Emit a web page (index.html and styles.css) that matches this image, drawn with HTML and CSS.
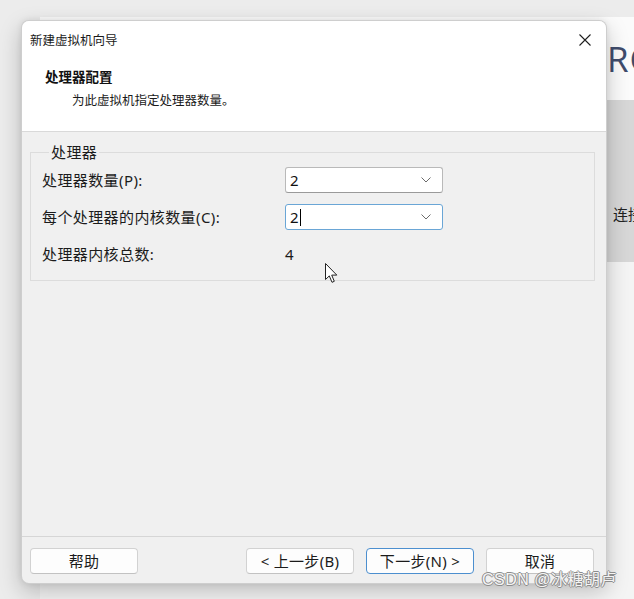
FILE: index.html
```html
<!DOCTYPE html>
<html lang="zh-CN">
<head>
<meta charset="utf-8">
<title>新建虚拟机向导</title>
<link rel="stylesheet" href="styles.css">
</head>
<body>
<div class="app">
  <div class="app-head"><span class="brand">RC</span></div>
  <div class="app-band"><span class="band-text">连接</span></div>
  <div class="app-rest"></div>
</div>

<div class="dialog">
  <div class="titlebar">
    <span class="title">新建虚拟机向导</span>
    <svg class="close" width="12" height="12" viewBox="0 0 12 12"><path d="M0.5 0.5 L11.5 11.5 M11.5 0.5 L0.5 11.5" stroke="#1f1f1f" stroke-width="1.1" fill="none"/></svg>
  </div>
  <div class="header">
    <div class="h-title">处理器配置</div>
    <div class="h-sub">为此虚拟机指定处理器数量。</div>
  </div>
  <div class="body">
    <fieldset class="group">
      <legend>处理器</legend>
      <div class="grid">
        <span class="label">处理器数量(P):</span>
        <div class="combo"><span class="val">2</span><svg class="chev" width="10" height="6" viewBox="0 0 10 6"><path d="M0.5 0.5 L5 5 L9.5 0.5" stroke="#6b6b6b" stroke-width="1" fill="none"/></svg></div>
        <span class="label">每个处理器的内核数量(C):</span>
        <div class="combo focus"><span class="val">2</span><span class="caret"></span><svg class="chev" width="10" height="6" viewBox="0 0 10 6"><path d="M0.5 0.5 L5 5 L9.5 0.5" stroke="#6b6b6b" stroke-width="1" fill="none"/></svg></div>
        <span class="label">处理器内核总数:</span>
        <span class="label total">4</span>
      </div>
    </fieldset>
  </div>
  <div class="footer">
    <button class="btn help">帮助</button>
    <div class="btn-group">
      <button class="btn">&lt; 上一步(B)</button>
      <button class="btn default">下一步(N) &gt;</button>
      <button class="btn">取消</button>
    </div>
  </div>
</div>

<svg class="cursor" width="13" height="21" viewBox="0 0 13 21"><path d="M0.5 0.5 L0.5 16.5 L4.3 12.9 L7 19.3 L9.3 18.3 L6.7 12.1 L11.8 12.1 Z" fill="#ffffff" stroke="#222" stroke-width="1" stroke-linejoin="round"/></svg>

<div class="watermark">CSDN @冰糖胡卢</div>
</body>
</html>
```
FILE: styles.css
```css
* { box-sizing: border-box; }
html, body { margin: 0; padding: 0; }
body {
  width: 634px;
  height: 599px;
  overflow: hidden;
  background: #ececec;
  font-family: "Noto Sans", "Noto Sans CJK SC", sans-serif;
  color: #1b1b1b;
  position: relative;
}

/* background application */
.app {
  margin-left: 40px;
  margin-top: 17px;
  height: 582px;
  display: flex;
  flex-direction: column;
  background: #fafafa;
}
.app-head {
  height: 83px;
  display: flex;
  align-items: center;
  padding-left: 567px;
  background: #fbfbfb;
}
.brand {
  font-family: "Open Sans", "Noto Sans", sans-serif;
  font-size: 35px;
  line-height: 40px;
  color: #3f4c6c;
  letter-spacing: 1px;
}
.app-band {
  height: 162px;
  background: #d7d7d7;
  padding-left: 573px;
  padding-top: 103px;
}
.band-text {
  font-family: "Noto Sans CJK SC", sans-serif;
  font-size: 15px;
  line-height: 20px;
  color: #222;
  white-space: nowrap;
}
.app-rest { flex: 1; background: #f4f4f4; }

/* dialog window */
.dialog {
  position: absolute;
  left: 21px;
  top: 20px;
  width: 586px;
  height: 564px;
  border: 1px solid rgba(0, 0, 0, 0.14);
  border-radius: 8px;
  overflow: hidden;
  background: #f0f0f0;
  box-shadow: 0 8px 22px rgba(0, 0, 0, 0.22), 0 0 6px rgba(0, 0, 0, 0.08);
  display: flex;
  flex-direction: column;
}
.titlebar {
  height: 37px;
  flex: none;
  background: #ffffff;
  display: flex;
  align-items: center;
  justify-content: space-between;
  padding: 0 15px 0 8px;
}
.title {
  font-family: "Noto Sans CJK SC", sans-serif;
  font-size: 12.5px;
  line-height: 18px;
  color: #1a1a1a;
}
.close { display: block; }

.header {
  height: 74px;
  flex: none;
  background: #ffffff;
  border-bottom: 1px solid #d9d9d9;
  padding-top: 8px;
}
.h-title {
  font-family: "Noto Sans CJK SC", sans-serif;
  font-weight: 700;
  font-size: 13.5px;
  line-height: 20px;
  padding-left: 23px;
  color: #111;
}
.h-sub {
  font-family: "Noto Sans CJK SC", sans-serif;
  font-size: 12.5px;
  line-height: 20px;
  margin-top: 4px;
  padding-left: 50px;
  color: #1a1a1a;
}

.body {
  flex: 1;
  padding: 10px 11px 0 8px;
  border-bottom: 1px solid #d6d6d6;
}
.group {
  margin: 0;
  border: 1px solid #dcdcdc;
  padding: 5px 0 13px 11px;
  min-width: 0;
}
.group legend {
  margin-left: 7px;
  padding: 0 2px;
  font-size: 15px;
  line-height: 20px;
  letter-spacing: 0.4px;
  color: #1b1b1b;
}
.grid {
  display: grid;
  grid-template-columns: 243px 158px;
  grid-auto-rows: 26px;
  row-gap: 11px;
  align-items: center;
}
.label {
  font-size: 15px;
  line-height: 20px;
  letter-spacing: 0.4px;
  color: #1b1b1b;
  white-space: nowrap;
}
.combo {
  height: 26px;
  background: #ffffff;
  border: 1px solid #b9b9b9;
  border-bottom-color: #9a9a9a;
  border-radius: 3px;
  display: flex;
  align-items: center;
  padding: 0 11px 0 4px;
}
.combo.focus {
  border-color: #6aa6d6;
}
.val {
  font-size: 15px;
  line-height: 20px;
  color: #111;
}
.caret {
  width: 1px;
  height: 17px;
  background: #000;
  margin-left: 1px;
}
.chev { margin-left: auto; display: block; }

.footer {
  height: 46px;
  flex: none;
  display: flex;
  align-items: flex-start;
  padding: 11px 12px 0 8px;
}
.btn-group {
  margin-left: auto;
  display: flex;
  gap: 12px;
}
.btn {
  width: 108px;
  height: 26px;
  margin: 0;
  padding: 0;
  background: #fdfdfd;
  border: 1px solid #d2d2d2;
  border-bottom-color: #c2c2c2;
  border-radius: 4px;
  font-family: "Noto Sans", "Noto Sans CJK SC", sans-serif;
  font-size: 15px;
  line-height: 20px;
  letter-spacing: 0.3px;
  color: #1b1b1b;
}
.btn.default {
  border-color: #4c8fcf;
}

.cursor {
  position: absolute;
  left: 325px;
  top: 263px;
}
.watermark {
  position: absolute;
  left: 482px;
  top: 569px;
  font-family: "Liberation Sans", "Noto Sans CJK SC", sans-serif;
  font-size: 16px;
  line-height: 22px;
  color: #f4f4f4;
  letter-spacing: 0.5px;
  text-shadow: 1px 0 0 #8c8c8c, -1px 0 0 #8c8c8c, 0 1px 0 #8c8c8c, 0 -1px 0 #8c8c8c;
  white-space: nowrap;
}
```
